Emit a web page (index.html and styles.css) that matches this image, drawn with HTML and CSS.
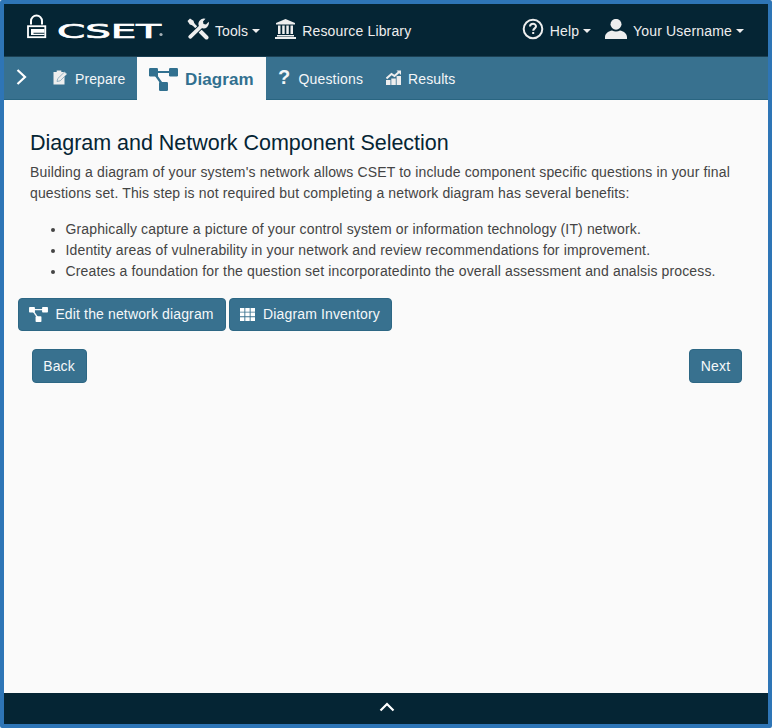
FILE: index.html
```html
<!DOCTYPE html>
<html lang="en">
<head>
<meta charset="utf-8">
<title>CSET</title>
<link rel="stylesheet" href="styles.css">
</head>
<body>
<svg class="defs" width="0" height="0" aria-hidden="true">
  <symbol id="diagram" viewBox="0 0 29 23">
    <path d="M5 4h20M6 6l7 10" fill="none" stroke="currentColor" stroke-width="2.200"/>
    <rect x="0" y="0" width="9" height="8.500" rx="1.200"/><rect x="20" y="0" width="9" height="8.500" rx="1.200"/><rect x="10" y="14" width="9" height="9" rx="1.200"/>
  </symbol>
</svg>
<div class="app">
  <header class="topbar">
    <a class="brand">
      <svg width="140" height="28" viewBox="0 0 140 28">
        <path d="M5 10.500V7a5.500 5.500 0 0 1 11 0v3.500" fill="none" stroke="#fff" stroke-width="2"/>
        <rect x="2" y="12.200" width="17.300" height="11" fill="none" stroke="#fff" stroke-width="1.800"/>
        <path d="M18.500 15H5v6h13.500v-1.300H7.500v-1h11z" fill="#fff"/>
        <text class="wordmark" x="31" y="23.800" textLength="104" lengthAdjust="spacingAndGlyphs">CSET</text>
        <circle cx="135" cy="20.500" r="1.600" fill="#a6b0b6"/>
      </svg>
    </a>
    <a class="item tools"><svg width="22" height="22" viewBox="0 0 22 22">
      <path d="M3 3 13 13" fill="none" stroke="#eee" stroke-width="2.600"/><path d="M.5 3 3 .5l3.500 2.300 1 3.200-1.500 1.500L2.800 6.500z" fill="#eee"/>
      <path d="m13.500 13.500 6 6" fill="none" stroke="#eee" stroke-width="4" stroke-linecap="round"/>
      <path d="M3 19 15 7.500" fill="none" stroke="#052534" stroke-width="5.500"/>
      <path d="M3.200 18.800 15 7.500" fill="none" stroke="#eee" stroke-width="3.800" stroke-linecap="round"/>
      <path d="M13 9.500a5.300 5.300 0 0 1 5.500-8.700L16 3.500l.5 2.500 2.500.5 2.700-2.700a5.300 5.300 0 0 1-7.200 6.200z" fill="#eee"/>
    </svg><span>Tools</span><i class="caret"></i></a>
    <a class="item library"><svg width="21" height="20" viewBox="0 0 21 20" fill="#eee">
      <path d="M10.500 0 20 4v1.600H1V4zM2 16h17v1.500H2zM0 18h21v2H0zM3 6.500h2.500V15H3zM7.200 6.500h2.500V15H7.200zM11.300 6.500h2.500V15h-2.500zM15.500 6.500H18V15h-2.500z"/>
    </svg><span>Resource Library</span></a>
    <a class="item help"><svg width="22" height="22" viewBox="0 0 22 22">
      <circle cx="11" cy="11" r="9.300" fill="none" stroke="#eee" stroke-width="2"/>
      <path d="M8 8.500c.2-3.600 6-3.500 6-.2 0 2-2.800 2.200-2.800 4.500M11.200 14v2" fill="none" stroke="#eee" stroke-width="2"/>
    </svg><span>Help</span><i class="caret"></i></a>
    <a class="item user"><svg width="22" height="20" viewBox="0 0 22 20" fill="#eee">
      <ellipse cx="11" cy="5.300" rx="5.500" ry="5.400"/><path d="M0 20v-2c0-4 4-6 7-6.600 2.500 1.300 5.500 1.300 8 0 3 .6 7 2.600 7 6.600v2z"/>
    </svg><span>Your Username</span><i class="caret"></i></a>
  </header>
  <nav class="tabs">
    <a class="expand"><svg width="11" height="16" viewBox="0 0 11 16"><path d="m1.500 1 7.500 7-7.500 7" fill="none" stroke="#fff" stroke-width="2.200"/></svg></a>
    <a class="tab prepare"><svg width="15" height="15" viewBox="0 0 15 15">
      <path d="M.5 2h3.200V.5h4.600V2h3.200v12.500H.5z" fill="#eee"/><path d="m4 11.500.8-3L11.500 2l2.500 2-6.800 6.800z" fill="#eee" stroke="#7fa3b6" stroke-width=".8"/>
    </svg><span>Prepare</span></a>
    <a class="tab active"><svg width="29" height="23" fill="currentColor"><use href="#diagram"/></svg><span>Diagram</span></a>
    <a class="tab questions"><b>?</b><span>Questions</span></a>
    <a class="tab results"><svg width="16" height="15" viewBox="0 0 16 15" fill="#eee">
      <path d="M0 10h4.500v5H0zM5.300 8.500h4.500V15H5.300zM10.600 6H15v9h-4.400z"/><path d="m.5 8.500 5-4.500 3 2L13 2" fill="none" stroke="#eee" stroke-width="2"/><path d="M10.500.5H15V5z"/>
    </svg><span>Results</span></a>
  </nav>
  <main class="content">
    <h1>Diagram and Network Component Selection</h1>
    <p><span class="line">Building a diagram of your system's network allows CSET to include component specific questions in your final</span> <span class="line">questions set. This step is not required but completing a network diagram has several benefits:</span></p>
    <ul>
      <li>Graphically capture a picture of your control system or information technology (IT) network.</li>
      <li>Identity areas of vulnerability in your network and review recommendations for improvement.</li>
      <li>Creates a foundation for the question set incorporatedinto the overall assessment and analsis process.</li>
    </ul>
    <div class="actions">
      <button class="btn edit"><svg width="19" height="15" viewBox="0 0 29 23" fill="#fff"><use href="#diagram" width="29" height="23"/></svg><span>Edit the network diagram</span></button>
      <button class="btn inventory"><svg width="15" height="13" viewBox="0 0 15 13" fill="#fff"><path d="M0 0h4.400v3.700H0zM5.300 0h4.400v3.700H5.300zM10.600 0H15v3.700h-4.400zM0 4.600h4.400v3.700H0zM5.300 4.600h4.400v3.700H5.300zM10.600 4.600H15v3.700h-4.400zM0 9.200h4.400V13H0zM5.300 9.200h4.400V13H5.300zM10.600 9.200H15V13h-4.400z"/></svg><span>Diagram Inventory</span></button>
    </div>
    <div class="pager"><button class="btn back">Back</button><button class="btn next">Next</button></div>
  </main>
  <footer class="footer"><svg width="16" height="10" viewBox="0 0 16 10"><path d="m1.500 8.500 6.500-6.500 6.500 6.500" fill="none" stroke="#fff" stroke-width="2.200"/></svg></footer>
</div>
</body>
</html>
```
FILE: styles.css
```css
* { box-sizing: border-box; }
body { margin: 0; font: 14px/21px "Liberation Sans", Arial, sans-serif; background: #fff; }
.defs { display: block; height: 0; }
svg { display: block; flex: none; }
.app { display: flex; flex-direction: column; width: 772px; height: 728px; border: 4px solid #2e75b6; border-radius: 2px; background: #fafafa; }
.topbar { display: flex; align-items: flex-start; height: 53px; flex: none; background: #052534; color: #eee; border-bottom: 1px solid #1b4053; }
.brand { width: 160px; padding: 10px 0 0 22px; }
.wordmark { font: 20px "DejaVu Sans", sans-serif; fill: #fff; stroke: #fff; stroke-width: 0.7px; }
.item { display: flex; align-items: center; height: 22px; margin-top: 14px; letter-spacing: 0.1px; white-space: nowrap; }
.item span { position: relative; top: 2px; margin-left: 6px; }
.tools { margin-left: 23px; }
.library { margin-left: 15px; letter-spacing: 0.16px; }
.help { margin-left: auto; }
.user { margin: 14px 24px 0 14px; letter-spacing: 0.17px; }
.caret { border: 4px solid transparent; border-top-color: #eee; border-bottom: 0; margin: 4px 0 0 4px; }
.tabs { display: flex; height: 43px; flex: none; background: #38718f; color: #f3f6f8; border-bottom: 1px solid #296581; }
.expand { width: 48px; padding: 12px 0 0 12px; }
.tab { display: flex; height: 43px; padding-top: 2px; align-items: center; white-space: nowrap; letter-spacing: 0.1px; }
.prepare { width: 85px; padding-left: 1px; gap: 7px; }
.prepare svg, .results svg { margin-bottom: 4px; }
.active { width: 129px; padding-left: 12px; gap: 7px; background: #fafafa; color: #31708f; font-size: 17px; font-weight: bold; }
.questions { padding-left: 12px; letter-spacing: 0.18px; }
.questions b { font-size: 20px; margin: -4px 8px 0 0; }
.results { padding-left: 23px; gap: 6px; }
.content { flex: 1; color: #444; }
h1 { margin: 29px 0 0 26px; font-size: 21.500px; line-height: 28px; font-weight: normal; letter-spacing: -0.02px; color: #052534; }
p { margin: 5px 0 15px 26px; }
.line { display: block; white-space: nowrap; letter-spacing: 0.145px; }
ul { margin: 0; padding-left: 61.500px; }
li { letter-spacing: 0.14px; white-space: nowrap; }
.actions { display: flex; gap: 3px; margin: 16px 0 0 14px; }
.btn { display: flex; align-items: center; justify-content: center; height: 34px; padding: 0; border: 1px solid #2d6784; border-radius: 4px; background: #38718f; color: #f5f8fa; font: inherit; white-space: nowrap; letter-spacing: 0.14px; }
.edit { width: 208px; height: 33px; gap: 7px; padding-right: 1px; }
.inventory { width: 163px; height: 33px; gap: 8px; padding-right: 1px; }
.pager { display: flex; justify-content: space-between; margin: 18px 26px 0 28px; }
.back { width: 55px; padding-right: 1px; }
.next { width: 53px; }
.footer { height: 31px; flex: none; background: #052534; display: flex; padding: 9px 0 0 375px; }
```
